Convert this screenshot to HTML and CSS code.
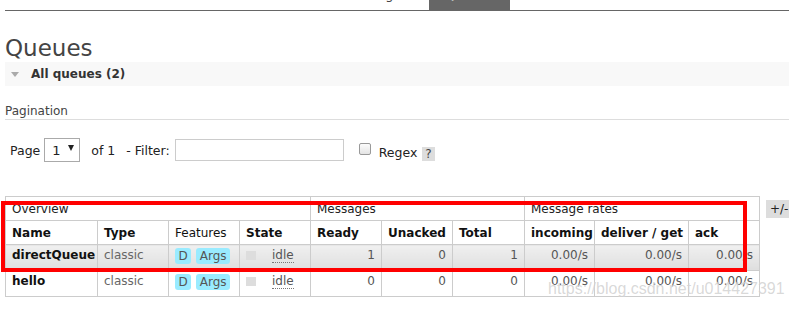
FILE: index.html
```html
<!DOCTYPE html>
<html lang="en">
<head>
  <meta charset="UTF-8">
  <title>Queues</title>
  <link rel="stylesheet" href="styles.css">
</head>
<body>
  <div class="page">
    <ul class="nav">
      <li class="nav-item">Exchanges</li>
      <li class="nav-item selected">Queues</li>
    </ul>

    <h1>Queues</h1>

    <div class="section-head">
      <span class="toggle"></span>
      <span>All queues (2)</span>
    </div>

    <h3 class="pagination-title">Pagination</h3>

    <div class="pagination">
      <span>Page</span>
      <span class="select">1 <span class="arrow"></span></span>
      <span class="of">of 1</span>
      <span class="filter-label">- Filter:</span>
      <span class="filter-input"></span>
      <span class="checkbox"></span>
      <span class="regex">Regex</span>
      <span class="help">?</span>
    </div>

    <div class="table-wrap">
      <table class="list">
        <colgroup>
          <col style="width: 92px">
          <col style="width: 71px">
          <col style="width: 71px">
          <col style="width: 71px">
          <col style="width: 71px">
          <col style="width: 71px">
          <col style="width: 72px">
          <col style="width: 70px">
          <col style="width: 94px">
          <col style="width: 71px">
        </colgroup>
        <thead>
          <tr class="group">
            <th colspan="4">Overview</th>
            <th colspan="3">Messages</th>
            <th colspan="3">Message rates</th>
          </tr>
          <tr class="cols">
            <th>Name</th>
            <th>Type</th>
            <th class="normal">Features</th>
            <th>State</th>
            <th>Ready</th>
            <th>Unacked</th>
            <th>Total</th>
            <th>incoming</th>
            <th>deliver / get</th>
            <th>ack</th>
          </tr>
        </thead>
        <tbody>
          <tr class="alt">
            <td class="name">directQueue</td>
            <td class="muted">classic</td>
            <td><span class="badge">D</span><span class="badge">Args</span></td>
            <td><span class="status"></span><abbr>idle</abbr></td>
            <td class="num">1</td>
            <td class="num">0</td>
            <td class="num">1</td>
            <td class="num">0.00/s</td>
            <td class="num">0.00/s</td>
            <td class="num">0.00/s</td>
          </tr>
          <tr>
            <td class="name">hello</td>
            <td class="muted">classic</td>
            <td><span class="badge">D</span><span class="badge">Args</span></td>
            <td><span class="status"></span><abbr>idle</abbr></td>
            <td class="num">0</td>
            <td class="num">0</td>
            <td class="num">0</td>
            <td class="num">0.00/s</td>
            <td class="num">0.00/s</td>
            <td class="num">0.00/s</td>
          </tr>
        </tbody>
      </table>
      <span class="columns-toggle">+/-</span>
    </div>
  </div>

  <div class="highlight"></div>
  <div class="watermark">https://blog.csdn.net/u014427391</div>
</body>
</html>
```

FILE: styles.css
```css
* {
  margin: 0;
  padding: 0;
  box-sizing: border-box;
}

body {
  width: 789px;
  height: 309px;
  overflow: hidden;
  position: relative;
  background: #fff;
  color: #444;
  font-family: "DejaVu Sans", Verdana, sans-serif;
  font-size: 12px;
}

.page {
  padding-left: 5px;
}

/* top navigation, mostly scrolled off */
.nav {
  list-style: none;
  display: flex;
  margin-top: -14px;
  padding-left: 333px;
  border-bottom: 1px solid #666;
}

.nav-item {
  height: 24px;
  line-height: 17px;
  padding: 0 21px 7px 0;
  font-size: 13px;
  color: #444;
}

.nav-item.selected {
  width: 81px;
  padding: 0 0 7px;
  text-align: center;
  background: #666;
  color: #fff;
}

h1 {
  margin-top: 24px;
  font-size: 23px;
  font-weight: normal;
  line-height: 27px;
  color: #444;
}

.section-head {
  display: flex;
  align-items: center;
  height: 24px;
  background: #f8f8f8;
  font-weight: bold;
  color: #333;
}

.toggle {
  width: 0;
  height: 0;
  margin: 0 12px 0 6px;
  border-left: 4px solid transparent;
  border-right: 4px solid transparent;
  border-top: 5px solid #aaa;
}

.pagination-title {
  margin-top: 17px;
  font-size: 12px;
  font-weight: normal;
  line-height: 16px;
  color: #444;
  border-bottom: 1px solid #ddd;
}

.pagination {
  display: flex;
  align-items: center;
  height: 24px;
  margin-top: 18px;
  padding-left: 5px;
  font-size: 12.5px;
  color: #222;
}

.select {
  display: flex;
  align-items: center;
  width: 36px;
  height: 24px;
  margin-left: 4px;
  padding-left: 7px;
  border: 1px solid #aaa;
  font-size: 13px;
}

.arrow {
  width: 0;
  height: 0;
  margin-left: 7px;
  margin-top: -4px;
  border-left: 3px solid transparent;
  border-right: 3px solid transparent;
  border-top: 6px solid #222;
}

.of {
  margin-left: 11px;
}

.filter-label {
  margin-left: 11px;
}

.filter-input {
  width: 169px;
  height: 22px;
  margin-left: 5px;
  border: 1px solid #ccc;
}

.checkbox {
  width: 12px;
  height: 12px;
  margin: -2px 0 0 15px;
  border: 1px solid #999;
  border-radius: 2px;
  background: linear-gradient(#fcfcfc, #e4e4e4);
}

.regex {
  margin: 4px 0 0 8px;
}

.help {
  height: 14px;
  margin: 8px 0 0 5px;
  padding: 0 3px;
  line-height: 14px;
  background: #ddd;
  color: #444;
  font-size: 12px;
}

.table-wrap {
  display: flex;
  align-items: flex-start;
  margin-top: 34px;
}

.list {
  width: 754px;
  table-layout: fixed;
  border-collapse: collapse;
}

.list th,
.list td {
  border: 1px solid #ccc;
  text-align: left;
  white-space: nowrap;
}

.list th {
  height: 24px;
  padding: 5px 6px 0;
  line-height: 14px;
  vertical-align: top;
  color: #111;
}

.list tr.group th {
  font-weight: normal;
  border-left: 1px solid #ccc;
  color: #222;
}

.list th.normal {
  font-weight: normal;
}

.list td {
  height: 26px;
  padding: 3px 6px 0;
  line-height: 14px;
  vertical-align: top;
  color: #555;
}

.list tr.alt td {
  background: linear-gradient(#f0f0f0, #dedede);
}

.list td.name {
  font-weight: bold;
  color: #111;
}

.list td.muted {
  color: #666;
}

.list td.num {
  text-align: right;
}

.badge {
  display: inline-block;
  height: 16px;
  margin-right: 5px;
  padding: 0 3.5px;
  line-height: 16px;
  border-radius: 3px;
  background: #99ebff;
  color: #555;
  vertical-align: top;
}

.status {
  display: inline-block;
  width: 10px;
  height: 9px;
  margin: 3px 16px 0 0;
  background: #ddd;
  vertical-align: top;
}

abbr {
  text-decoration: none;
  border-bottom: 1px dotted #777;
}

.columns-toggle {
  margin: 4px 0 0 6px;
  padding: 1px 4px;
  background: #ddd;
  color: #222;
  white-space: nowrap;
  line-height: 16px;
}

/* annotations drawn over the screenshot */
.highlight {
  position: absolute;
  left: 1px;
  top: 201px;
  width: 746px;
  height: 71px;
  border: 4px solid #f00;
}

.watermark {
  position: absolute;
  left: 548px;
  top: 280px;
  font-family: "Liberation Sans", Arial, sans-serif;
  font-size: 16px;
  color: rgba(170, 170, 170, 0.45);
  text-shadow: 0 0 1px rgba(255, 255, 255, 0.8);
}
```
